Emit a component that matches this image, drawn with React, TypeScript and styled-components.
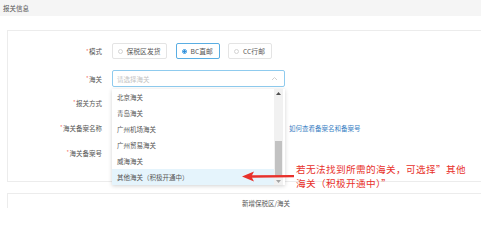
import React from "react";
import styled, { createGlobalStyle } from "styled-components";

const GlobalStyle = createGlobalStyle`
  html, body { margin: 0; padding: 0; background: #fff; }
  body {
    font-family: "Noto Sans CJK SC", "Noto Sans", sans-serif;
    width: 481px; height: 208px; overflow: hidden;
  }
`;

const Page = styled.div`
  position: relative;
  width: 481px;
  height: 208px;
  overflow: hidden;
  background: #fff;
  color: #555;
`;

const Header = styled.div`
  height: 16px;
  line-height: 16px;
  padding-left: 3px;
  background: #f5f5f5;
  font-size: 6.5px;
  color: #555;
`;

const Card = styled.div<{ $top: number; $height?: number }>`
  box-sizing: border-box;
  width: 518px;
  margin: ${(p) => p.$top}px 0 0 7px;
  height: ${(p) => (p.$height ? `${p.$height}px` : "auto")};
  border: 1px solid #ececec;
  background: #fff;
`;

const Form = styled.div`
  padding-top: 12px;
  display: flex;
  flex-direction: column;
`;

const Row = styled.div<{ $mt: number; $h: number }>`
  display: grid;
  grid-template-columns: 94px auto;
  column-gap: 10px;
  align-items: center;
  margin-top: ${(p) => p.$mt}px;
  height: ${(p) => p.$h}px;
`;

const Label = styled.div`
  text-align: right;
  font-size: 6.5px;
  color: #555;
  white-space: nowrap;
`;

const Star = styled.span`
  color: #f0443c;
  font-size: 5.5px;
  position: relative;
  top: -1.5px;
  margin-right: 0.5px;
`;

const Controls = styled.div`
  display: flex;
  align-items: center;
  gap: 4px;
  height: 100%;
`;

const RadioGroup = styled.div`
  display: flex;
  gap: 8.5px;
  height: 100%;
`;

const RadioBox = styled.div<{ $active?: boolean }>`
  box-sizing: border-box;
  height: 16px;
  display: flex;
  align-items: center;
  gap: 3.5px;
  padding: 0 6px 0 5px;
  border: 1px solid ${(p) => (p.$active ? "#5aaee3" : "#e4e4e4")};
  border-radius: 2px;
  font-size: 6.8px;
  color: #555;
  white-space: nowrap;
`;

const RadioDot = styled.span<{ $active?: boolean }>`
  box-sizing: border-box;
  width: 5px;
  height: 5px;
  border-radius: 50%;
  border: 1px solid ${(p) => (p.$active ? "#3d9be0" : "#d4d4d4")};
  background: ${(p) => (p.$active ? "radial-gradient(circle, #2f8fdc 55%, #fff 60%)" : "#fff")};
`;

const SelectWrap = styled.div`
  position: relative;
  width: 173px;
  height: 17px;
`;

const SelectBox = styled.div`
  box-sizing: border-box;
  width: 100%;
  height: 100%;
  border: 1px solid #8fcbee;
  border-radius: 2px;
  display: flex;
  align-items: center;
  justify-content: space-between;
  padding: 0 6px 0 4px;
  font-size: 6.5px;
  color: #c3c3c3;
`;

const Field = styled.div`
  box-sizing: border-box;
  width: 173px;
  height: 17px;
  border: 1px solid #e4e4e4;
  border-radius: 2px;
`;

const Link = styled.a`
  font-size: 6.5px;
  color: #3b7fc4;
  text-decoration: none;
  white-space: nowrap;
`;

const Dropdown = styled.div`
  position: absolute;
  top: 19px;
  left: 0;
  width: 173px;
  height: 96px;
  box-sizing: border-box;
  background: #fff;
  box-shadow: 0 1px 4px rgba(0, 0, 0, 0.18);
  display: flex;
  z-index: 5;
`;

const List = styled.div`
  flex: 1;
  display: flex;
  flex-direction: column;
`;

const Item = styled.div<{ $hl?: boolean }>`
  height: 16px;
  line-height: 16px;
  padding-left: 5px;
  font-size: 6.5px;
  color: #555;
  white-space: nowrap;
  background: ${(p) => (p.$hl ? "#e5f4fc" : "transparent")};
`;

const Scrollbar = styled.div`
  width: 9px;
  margin-right: 2px;
  background: #f1f1f1;
  display: flex;
  flex-direction: column;
`;

const ScrollBtn = styled.div`
  height: 8px;
  display: flex;
  align-items: center;
  justify-content: center;
`;

const Track = styled.div`
  flex: 1;
  display: flex;
  flex-direction: column;
  justify-content: flex-end;
`;

const Thumb = styled.div`
  height: 36px;
  margin: 0 1px;
  background: #c2c2c2;
`;

const Note = styled.div`
  position: absolute;
  left: 296px;
  top: 162px;
  z-index: 6;
  display: flex;
  flex-direction: column;
`;

const NoteLine = styled.div`
  font-size: 9.6px;
  line-height: 14px;
  letter-spacing: 0.4px;
  color: #e8312b;
  white-space: nowrap;
`;

const Arrow = styled.svg`
  position: absolute;
  left: 241px;
  top: 170px;
  z-index: 7;
`;

const Centered = styled.div`
  height: 16px;
  line-height: 16px;
  margin-top: 1px;
  text-align: center;
  font-size: 6.5px;
  color: #555;
`;

const options = ["北京海关", "青岛海关", "广州机场海关", "广州贸易海关", "威海海关", "其他海关（积极开通中）"];

export default function App() {
  return (
    <>
      <GlobalStyle />
      <Page>
        <Header>报关信息</Header>
        <Card $top={14} $height={152}>
          <Form>
            <Row $mt={0} $h={16}>
              <Label><Star>*</Star>模式</Label>
              <RadioGroup>
                <RadioBox><RadioDot />保税区发货</RadioBox>
                <RadioBox $active><RadioDot $active />BC直邮</RadioBox>
                <RadioBox><RadioDot />CC行邮</RadioBox>
              </RadioGroup>
            </Row>
            <Row $mt={11} $h={17}>
              <Label><Star>*</Star>海关</Label>
              <SelectWrap>
                <SelectBox>
                  请选择海关
                  <svg width="7" height="5" viewBox="0 0 7 5">
                    <polyline points="1,4 3.5,1.5 6,4" fill="none" stroke="#cfcfcf" strokeWidth="1" />
                  </svg>
                </SelectBox>
                <Dropdown>
                  <List>
                    {options.map((o, i) => (
                      <Item key={o} $hl={i === options.length - 1}>{o}</Item>
                    ))}
                  </List>
                  <Scrollbar>
                    <ScrollBtn>
                      <svg width="5" height="3" viewBox="0 0 5 3"><polygon points="0,3 2.5,0 5,3" fill="#505050" /></svg>
                    </ScrollBtn>
                    <Track><Thumb /></Track>
                    <ScrollBtn>
                      <svg width="5" height="3" viewBox="0 0 5 3"><polygon points="0,0 2.5,3 5,0" fill="#a3a3a3" /></svg>
                    </ScrollBtn>
                  </Scrollbar>
                </Dropdown>
              </SelectWrap>
            </Row>
            <Row $mt={7} $h={17}>
              <Label><Star>*</Star>报关方式</Label>
              <Controls><Field /></Controls>
            </Row>
            <Row $mt={8} $h={17}>
              <Label><Star>*</Star>海关备案名称</Label>
              <Controls>
                <Field />
                <Link href="#">如何查看备案名和备案号</Link>
              </Controls>
            </Row>
            <Row $mt={8} $h={17}>
              <Label><Star>*</Star>海关备案号</Label>
              <Controls><Field /></Controls>
            </Row>
          </Form>
        </Card>
        <Card $top={11}>
          <Centered>新增保税区/海关</Centered>
        </Card>
        <Note>
          <NoteLine>若无法找到所需的海关，可选择”其他</NoteLine>
          <NoteLine>海关（积极开通中）”</NoteLine>
        </Note>
        <Arrow width="54" height="12" viewBox="0 0 54 12">
          <path d="M1 6.5 L13 1.5 L11 5.3 L53 5 L53 7.3 L11 7.8 L13 11.5 Z" fill="#e8312b" />
        </Arrow>
      </Page>
    </>
  );
}
